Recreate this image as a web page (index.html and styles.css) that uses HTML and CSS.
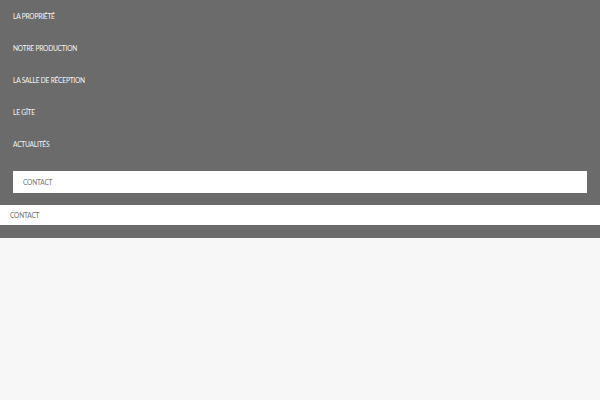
FILE: index.html
```html
<!DOCTYPE html>
<html>
<head>
<meta charset="utf-8">
<link rel="stylesheet" href="styles.css">
</head>
<body>
<div class="menu">
  <ul class="nav">
    <li class="nav-item">LA PROPRIÉTÉ</li>
    <li class="nav-item">NOTRE PRODUCTION</li>
    <li class="nav-item">LA SALLE DE RÉCEPTION</li>
    <li class="nav-item">LE GÎTE</li>
    <li class="nav-item">ACTUALITÉS</li>
  </ul>
  <div class="contact-box">CONTACT</div>
  <div class="contact-bar">CONTACT</div>
</div>
</body>
</html>
```

FILE: styles.css
```css
html, body {
  margin: 0;
  padding: 0;
  background: #f7f7f7;
  font-family: Lato, "Open Sans", sans-serif;
}
.menu {
  background: #6b6b6b;
  height: 238px;
  display: flex;
  flex-direction: column;
}
.nav {
  list-style: none;
  margin: 0;
  padding: 0;
}
.nav-item {
  height: 31px;
  padding-bottom: 1px;
  display: flex;
  align-items: center;
  padding-left: 13px;
  color: #f4f4f4;
  font-size: 6.6px;
  font-weight: 400;
  letter-spacing: -0.2px;
}
.contact-box {
  margin: 11px 13px 0 13px;
  height: 21px;
  padding-bottom: 1px;
  background: #ffffff;
  display: flex;
  align-items: center;
  padding-left: 10px;
  color: #777777;
  font-size: 6.6px;
  letter-spacing: -0.2px;
}
.contact-bar {
  margin-top: 12px;
  height: 19px;
  padding-bottom: 1px;
  background: #ffffff;
  display: flex;
  align-items: center;
  padding-left: 10px;
  color: #6f6f6f;
  font-size: 6.6px;
  letter-spacing: -0.2px;
}
```
